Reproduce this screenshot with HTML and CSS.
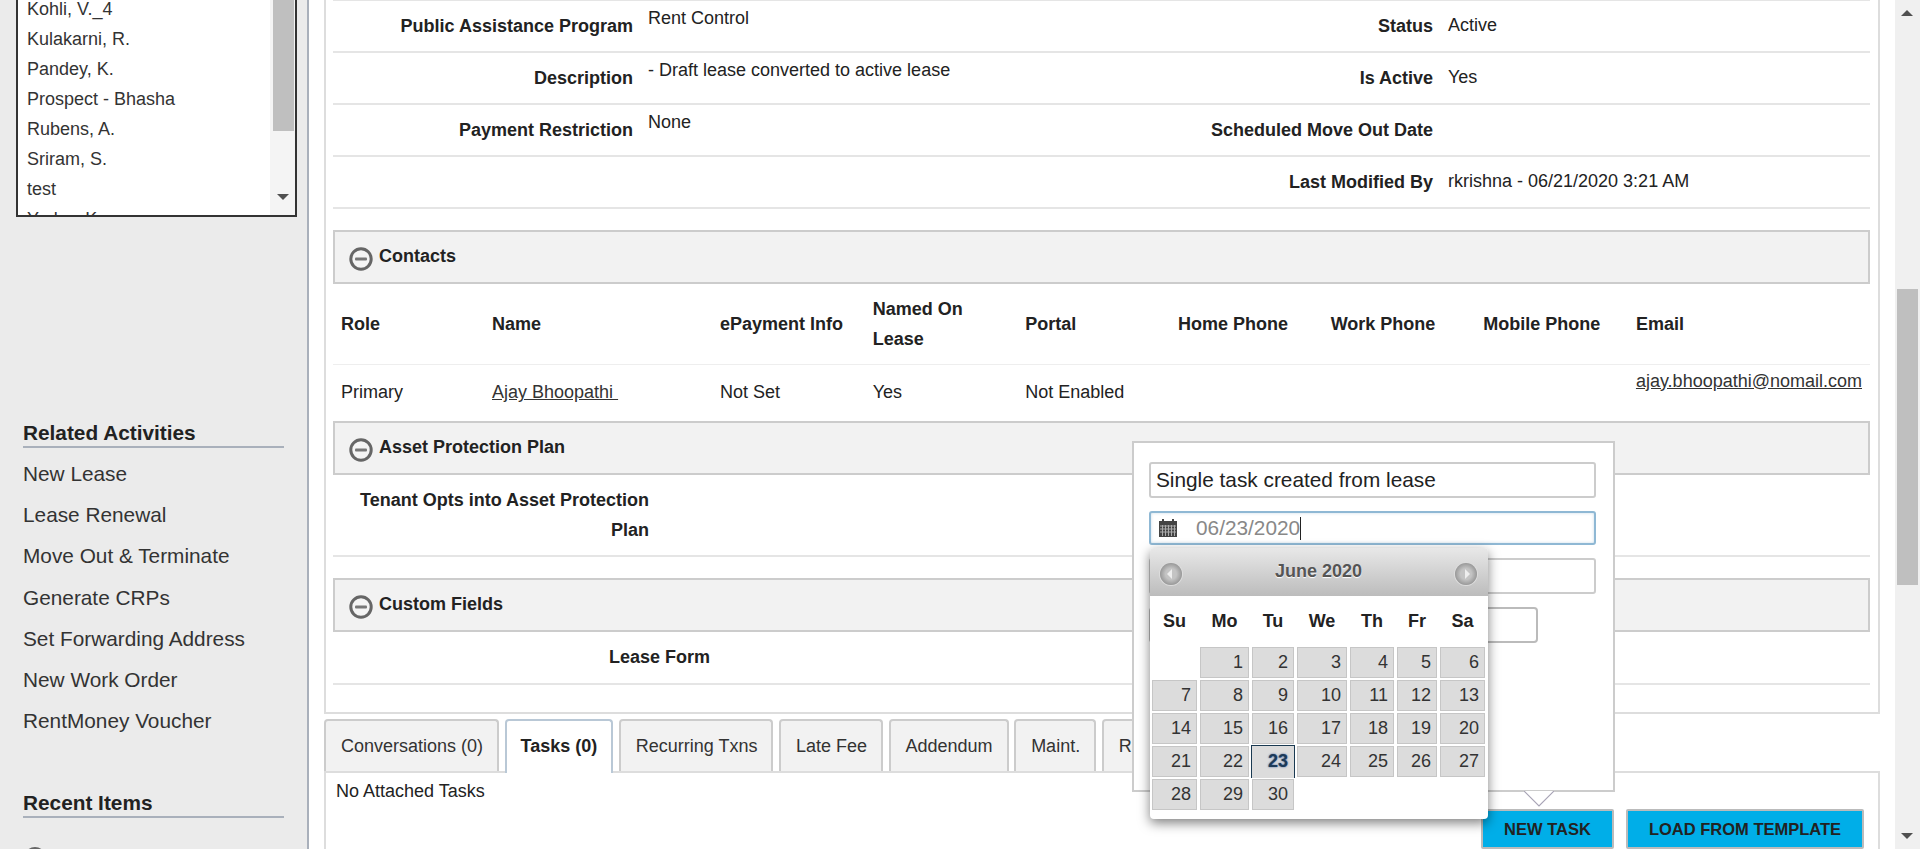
FILE: index.html
```html
<!DOCTYPE html>
<html lang="en">
<head>
    <meta charset="UTF-8">
    <title>Lease Details</title>
    <link rel="stylesheet" href="styles.css">
</head>
<body>
    <aside class="sidebar">
        <div class="listbox">
            <ul class="listbox-items">
                <li>Kohli, V._4</li>
                <li>Kulakarni, R.</li>
                <li>Pandey, K.</li>
                <li>Prospect - Bhasha</li>
                <li>Rubens, A.</li>
                <li>Sriram, S.</li>
                <li>test</li>
                <li>Yadav, K.</li>
            </ul>
            <div class="listbox-bar">
                <div class="listbox-thumb"></div>
                <div class="arrow-down"></div>
            </div>
        </div>

        <h3 class="side-title related-title">Related Activities</h3>
        <ul class="side-links">
            <li>New Lease</li>
            <li>Lease Renewal</li>
            <li>Move Out &amp; Terminate</li>
            <li>Generate CRPs</li>
            <li>Set Forwarding Address</li>
            <li>New Work Order</li>
            <li>RentMoney Voucher</li>
        </ul>

        <h3 class="side-title recent-title">Recent Items</h3>
        <div class="recent-icon"></div>
    </aside>

    <main class="content">
        <section class="panel">
            <div class="info-row">
                <div class="label">Public Assistance Program</div>
                <div class="value value-high">Rent Control</div>
                <div class="label">Status</div>
                <div class="value">Active</div>
            </div>
            <div class="info-row">
                <div class="label">Description</div>
                <div class="value value-high">- Draft lease converted to active lease</div>
                <div class="label">Is Active</div>
                <div class="value">Yes</div>
            </div>
            <div class="info-row">
                <div class="label">Payment Restriction</div>
                <div class="value value-high">None</div>
                <div class="label">Scheduled Move Out Date</div>
                <div class="value"></div>
            </div>
            <div class="info-row">
                <div class="label"></div>
                <div class="value"></div>
                <div class="label">Last Modified By</div>
                <div class="value">rkrishna - 06/21/2020 3:21 AM</div>
            </div>

            <div class="section-head section-first">
                <svg class="minus" viewBox="0 0 24 24"><circle cx="12" cy="12" r="10.2" fill="#f4f4f4" stroke="#666" stroke-width="3"/><rect x="6" y="10.500" width="12" height="3" rx="1" fill="#777"/></svg>
                <span>Contacts</span>
            </div>
            <table class="contacts">
                <thead>
                    <tr>
                        <th class="col-role">Role</th>
                        <th class="col-name">Name</th>
                        <th class="col-std">ePayment Info</th>
                        <th class="col-std">Named On Lease</th>
                        <th class="col-std">Portal</th>
                        <th class="col-std">Home Phone</th>
                        <th class="col-std">Work Phone</th>
                        <th class="col-std">Mobile Phone</th>
                        <th>Email</th>
                    </tr>
                </thead>
                <tbody>
                    <tr>
                        <td>Primary</td>
                        <td><a href="#">Ajay Bhoopathi&nbsp;</a></td>
                        <td>Not Set</td>
                        <td>Yes</td>
                        <td>Not Enabled</td>
                        <td></td>
                        <td></td>
                        <td></td>
                        <td class="email-cell"><a href="#">ajay.bhoopathi@nomail.com</a></td>
                    </tr>
                </tbody>
            </table>

            <div class="section-head">
                <svg class="minus" viewBox="0 0 24 24"><circle cx="12" cy="12" r="10.2" fill="#f4f4f4" stroke="#666" stroke-width="3"/><rect x="6" y="10.500" width="12" height="3" rx="1" fill="#777"/></svg>
                <span>Asset Protection Plan</span>
            </div>
            <div class="plan-row">
                <div class="label">Tenant Opts into Asset Protection Plan</div>
            </div>

            <div class="section-head section-custom">
                <svg class="minus" viewBox="0 0 24 24"><circle cx="12" cy="12" r="10.2" fill="#f4f4f4" stroke="#666" stroke-width="3"/><rect x="6" y="10.500" width="12" height="3" rx="1" fill="#777"/></svg>
                <span>Custom Fields</span>
            </div>
            <div class="form-row">
                <div class="label">Lease Form</div>
            </div>
        </section>

        <nav class="tabs">
            <div class="tab">Conversations (0)</div>
            <div class="tab tab-active">Tasks (0)</div>
            <div class="tab">Recurring Txns</div>
            <div class="tab">Late Fee</div>
            <div class="tab">Addendum</div>
            <div class="tab">Maint.</div>
            <div class="tab">Renewals</div>
        </nav>
        <section class="tab-body">
            <p class="empty-note">No Attached Tasks</p>
            <div class="tab-actions">
                <button class="action new-task">NEW TASK</button>
                <button class="action load-template">LOAD FROM TEMPLATE</button>
            </div>
        </section>
    </main>

    <div class="scrollbar">
        <div class="arrow-up"></div>
        <div class="scroll-thumb"></div>
        <div class="arrow-down page-down"></div>
    </div>

    <!-- task popup with the open date picker -->
    <div class="popup">
        <div class="field field-title">Single task created from lease</div>
        <div class="field field-date">
            <svg class="cal-icon" viewBox="0 0 18 18">
                <rect x="0" y="2" width="18" height="16" fill="#444"/>
                <rect x="3" y="0" width="2" height="3" fill="#444"/>
                <rect x="13" y="0" width="2" height="3" fill="#444"/>
                <path d="M1 7h16M1 10h16M1 13h16M3.500 6v11M6.500 6v11M9.500 6v11M12.500 6v11M15.500 6v11" stroke="#aaa" stroke-width="1"/>
            </svg>
            <span class="date-text">06/23/2020</span><span class="caret"></span>
        </div>
        <div class="field field-plain"></div>
        <div class="field field-short"></div>

        <div class="datepicker">
            <div class="dp-head">
                <span class="dp-nav dp-prev"></span>
                <span class="dp-month">June 2020</span>
                <span class="dp-nav dp-next"></span>
            </div>
            <div class="dp-grid dp-weekdays">
                <div>Su</div><div>Mo</div><div>Tu</div><div>We</div><div>Th</div><div>Fr</div><div>Sa</div>
            </div>
            <div class="dp-grid dp-days">
                <div class="dp-blank"></div>
                <div>1</div><div>2</div><div>3</div><div>4</div><div>5</div><div>6</div>
                <div>7</div><div>8</div><div>9</div><div>10</div><div>11</div><div>12</div><div>13</div>
                <div>14</div><div>15</div><div>16</div><div>17</div><div>18</div><div>19</div><div>20</div>
                <div>21</div><div>22</div><div class="dp-today">23</div><div>24</div><div>25</div><div>26</div><div>27</div>
                <div>28</div><div>29</div><div>30</div>
            </div>
        </div>

        <svg class="popup-tip" viewBox="0 0 30 16"><path d="M0 0 L15 15 L30 0" fill="#fff" stroke="#a8a4b6" stroke-width="1.200"/></svg>
    </div>
</body>
</html>
```

FILE: styles.css
```css
* {
    margin: 0;
    padding: 0;
    box-sizing: border-box;
}

html, body {
    height: 100vh;
    overflow: hidden;
}

body {
    display: flex;
    font-family: "Liberation Sans", Arial, sans-serif;
    font-size: 18px;
    color: #222;
    background: #fff;
}

ul {
    list-style: none;
}

a {
    color: #333;
}

/* sidebar */
.sidebar {
    width: 309px;
    flex: none;
    background: #ebebeb;
    border-right: 2px solid #a9b0bb;
    overflow: hidden;
}

.listbox {
    display: flex;
    width: 281px;
    height: 225px;
    margin: -8px 0 0 16px;
    background: #fff;
    border: 2px solid #333;
}

.listbox-items {
    flex: 1;
    height: 221px;
    overflow: hidden;
    padding-left: 9px;
    color: #333;
}

.listbox-items li {
    height: 30px;
    line-height: 30px;
}

.listbox-bar {
    width: 25px;
    flex: none;
    background: #f4f4f4;
    padding: 0 1px 0 3px;
}

.listbox-thumb {
    height: 137px;
    background: #bfbfbf;
}

.arrow-down {
    width: 0;
    height: 0;
    border-left: 6px solid transparent;
    border-right: 6px solid transparent;
    border-top: 6px solid #505050;
}

.listbox-bar .arrow-down {
    margin: 63px 0 0 4px;
}

.side-title {
    margin: 0 23px;
    height: 27px;
    line-height: 24px;
    font-size: 20.8px;
    font-weight: bold;
    color: #222;
    border-bottom: 2px solid #a9b0bb;
}

.related-title {
    margin-top: 204px;
}

.side-links {
    margin: 5px 23px 0;
    color: #333;
    font-size: 20.8px;
}

.side-links li {
    height: 41.2px;
    line-height: 41.2px;
}

.recent-title {
    margin-top: 50px;
}

.recent-icon {
    width: 22px;
    height: 22px;
    margin: 29px 0 0 24px;
    border: 3px solid #666;
    border-radius: 50%;
}

/* main column */
.content {
    flex: 1;
    min-width: 0;
    padding: 0 15px;
}

.panel {
    height: 715px;
    margin-top: -1px;
    padding: 0 8px 0 7px;
    border: 2px solid #ddd;
    border-top: none;
}

.info-row {
    display: grid;
    grid-template-columns: 300px 470px 300px 1fr;
    column-gap: 15px;
    height: 52px;
    border-top: 2px solid #e5e5e5;
    align-items: center;
}

.info-row:nth-child(4) {
    border-bottom: 2px solid #e5e5e5;
    height: 54px;
}

.label {
    font-weight: bold;
    text-align: right;
}

.value {
    padding-bottom: 2px;
}

.value-high {
    align-self: start;
    padding: 7px 0 0;
}

.section-head {
    display: flex;
    align-items: center;
    height: 54px;
    padding-left: 14px;
    background: #f2f2f2;
    border: 2px solid #ccc;
    font-weight: bold;
}

.section-head span {
    margin: -2px 0 0 6px;
}

.section-first {
    margin-top: 21px;
}

.section-custom {
    margin-top: 21px;
}

.minus {
    width: 24px;
    height: 24px;
    margin-top: 4px;
}

.contacts {
    width: 100%;
    table-layout: fixed;
    border-collapse: collapse;
}

.contacts th {
    height: 80px;
    padding: 0 8px;
    line-height: 30px;
    text-align: left;
    border-bottom: 1px solid #eee;
}

.contacts td {
    height: 57px;
    padding: 0 8px;
}

.contacts .email-cell {
    vertical-align: top;
    padding-top: 6px;
}

.col-role { width: 151px; }
.col-name { width: 228px; }
.col-std { width: 152.67px; }

.plan-row {
    height: 82px;
    border-bottom: 2px solid #e5e5e5;
    padding-top: 10px;
}

.plan-row .label {
    width: 316px;
    line-height: 30px;
}

.form-row {
    height: 53px;
    border-bottom: 2px solid #e5e5e5;
    padding-top: 15px;
}

.form-row .label {
    width: 377px;
}

/* tabs */
.tabs {
    display: flex;
    gap: 5.5px;
    margin-top: 5px;
    height: 52px;
}

.tab {
    padding: 0 14px 0 15px;
    line-height: 50px;
    color: #333;
    background: #f2f2f2;
    border: 2px solid #ccc;
    border-bottom: none;
    border-radius: 4px 4px 0 0;
}

.tab-active {
    position: relative;
    height: 54px;
    padding: 0 14px;
    font-weight: bold;
    color: #222;
    background: #fff;
    border-color: #b9c8d6;
}

.tab-body {
    height: 80px;
    padding: 8px 14px 0 10px;
    border: 2px solid #ddd;
    border-bottom: none;
}

.empty-note {
    line-height: 20px;
}

.tab-actions {
    display: flex;
    justify-content: flex-end;
    gap: 12px;
    margin-top: 8px;
}

.action {
    height: 40px;
    font: bold 16.5px "Liberation Sans", Arial, sans-serif;
    color: #222;
    background: #00aee8;
    border: 2px solid #bbb;
    border-radius: 2px;
}

.new-task { width: 133px; }
.load-template { width: 238px; }

/* page scrollbar */
.scrollbar {
    width: 25px;
    flex: none;
    padding: 10px 2px 0;
    background: #f0f0f0;
}

.arrow-up {
    width: 0;
    height: 0;
    margin-left: 4px;
    border-left: 6px solid transparent;
    border-right: 6px solid transparent;
    border-bottom: 6px solid #505050;
}

.scroll-thumb {
    height: 296px;
    margin-top: 273px;
    background: #bfbfbf;
}

.page-down {
    margin: 248px 0 0 4px;
}

/* task popup */
.popup {
    position: absolute;
    left: 1132px;
    top: 441px;
    width: 483px;
    height: 351px;
    padding: 19px 15px;
    background: #fff;
    border: 2px solid #ccc;
}

.field {
    width: 447px;
    height: 36px;
    margin-bottom: 13px;
    padding-left: 5px;
    font-size: 20.8px;
    line-height: 32px;
    color: #222;
    border: 2px solid #ccc;
    border-radius: 3px;
}

.field-date {
    display: flex;
    align-items: center;
    height: 34px;
    padding-left: 8px;
    border-color: #8fb8d4;
    box-shadow: inset 0 0 3px rgba(143, 184, 212, 0.5);
}

.cal-icon {
    width: 18px;
    height: 18px;
    margin-right: 19px;
}

.date-text {
    color: #888;
}

.caret {
    width: 1px;
    height: 23px;
    background: #222;
}

.field-short {
    width: 389px;
    border-color: #bbb;
    border-radius: 4px;
}

.datepicker {
    position: absolute;
    left: 16px;
    top: 105px;
    width: 338px;
    height: 271px;
    padding-bottom: 8px;
    background: #fff;
    border-radius: 4px;
    box-shadow: 0 4px 12px rgba(0, 0, 0, 0.5);
}

.dp-head {
    display: flex;
    align-items: center;
    justify-content: space-between;
    height: 48px;
    padding: 0 11px 0 10px;
    background: linear-gradient(#e8e8e8, #bcbcbc);
    border-radius: 4px 4px 0 0;
}

.dp-month {
    margin-top: -2px;
    font-weight: bold;
    color: #555;
    text-shadow: 0 1px 1px #fff;
}

.dp-nav {
    position: relative;
    width: 22px;
    height: 22px;
    margin-top: 4px;
    background: radial-gradient(circle, #c4c4c4 35%, #999 70%);
    border-radius: 50%;
    box-shadow: 0 0 0 1px #ddd;
}

.dp-nav::after {
    content: "";
    position: absolute;
    top: 6px;
    border-top: 5px solid transparent;
    border-bottom: 5px solid transparent;
}

.dp-prev::after {
    left: 7px;
    border-right: 5px solid #eee;
}

.dp-next::after {
    left: 10px;
    border-left: 5px solid #eee;
}

.dp-grid {
    display: grid;
    grid-template-columns: 45px 49px 42px 50px 44px 40px 45px;
    column-gap: 3px;
    padding-left: 2px;
}

.dp-weekdays {
    height: 51px;
    line-height: 50px;
    font-weight: bold;
    text-align: center;
}

.dp-days {
    grid-auto-rows: 31px;
    row-gap: 2px;
}

.dp-days div {
    padding-right: 5px;
    line-height: 28px;
    text-align: right;
    color: #333;
    background: #dcdcdc;
    border: 1px solid #c6c6c6;
}

.dp-days .dp-blank {
    background: none;
    border: none;
}

.dp-days .dp-today {
    margin: -1px;
    padding-right: 6px;
    font-weight: bold;
    line-height: 31px;
    color: #1c3a58;
    border: 1px solid #1a3a52;
    border-bottom: none;
    text-shadow: 0 0 2px #3a5a9a;
}

.popup-tip {
    position: absolute;
    left: 390px;
    top: 348px;
    width: 30px;
    height: 16px;
}
```
